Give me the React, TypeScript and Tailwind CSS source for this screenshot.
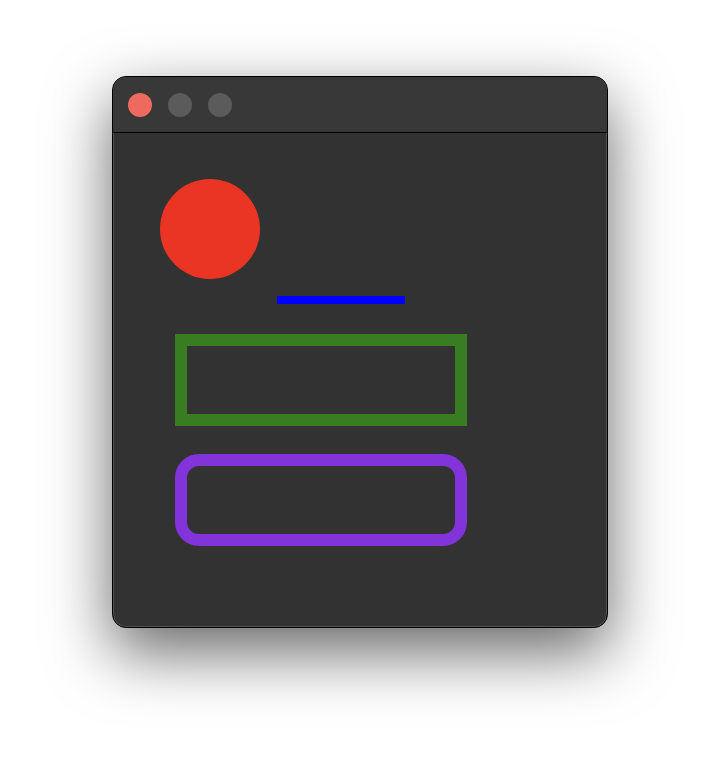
export default function App() {
    return (
        <div className="w-[720px] h-[776px] bg-white pt-[76px] pl-[112px]">
            {/* window */}
            <div className="w-[496px] h-[552px] rounded-[14px] border border-black bg-[#323232] overflow-hidden shadow-[0_24px_64px_rgba(0,0,0,0.6),inset_0_0_0_1px_rgba(255,255,255,0.16)] flex flex-col">
                {/* title bar */}
                <div className="h-[56px] bg-[#383838] border-b border-black flex items-center pl-[15px] gap-4 shrink-0">
                    <div className="w-6 h-6 rounded-full bg-[#ee6a5f]" />
                    <div className="w-6 h-6 rounded-full bg-[#5b5b5b]" />
                    <div className="w-6 h-6 rounded-full bg-[#5b5b5b]" />
                </div>

                {/* content */}
                <div className="flex flex-col items-start pt-[46px] pl-[47px]">
                    <div className="w-[100px] h-[100px] rounded-full bg-[#eb3524]" />
                    <div className="ml-[117px] mt-[17px] w-[128px] h-2 bg-[#0000ff]" />
                    <div className="ml-[15px] mt-[30px] w-[292px] h-[92px] border-[12px] border-[#397d22]" />
                    <div className="ml-[15px] mt-[28px] w-[292px] h-[92px] border-[12px] border-[#8233d9] rounded-[24px]" />
                </div>
            </div>
        </div>
    );
}
